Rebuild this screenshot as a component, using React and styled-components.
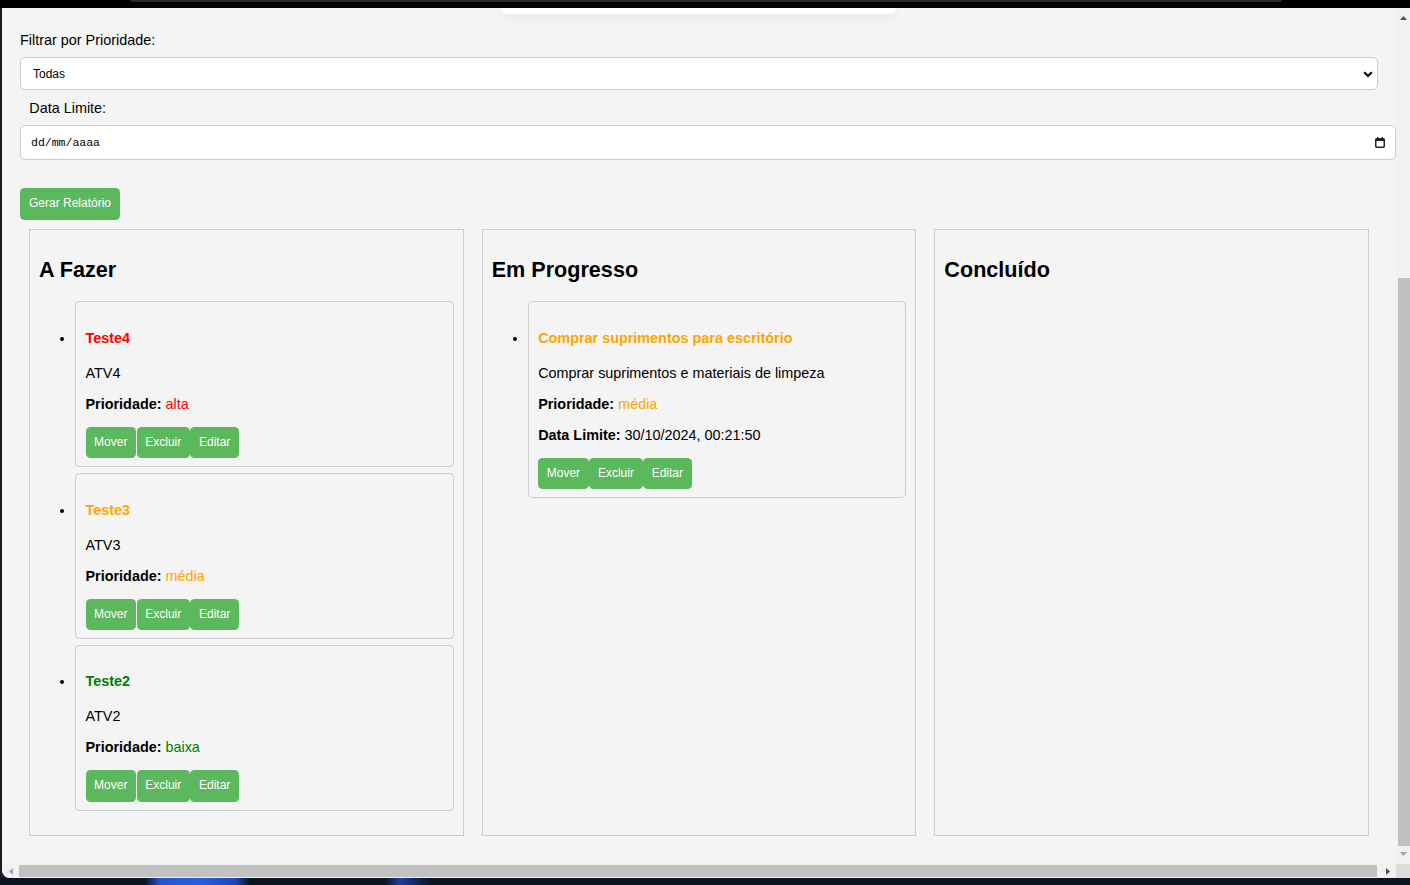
import React from 'react';
import styled, { createGlobalStyle } from 'styled-components';

const GlobalStyle = createGlobalStyle`
  * { box-sizing: border-box; }
  html, body {
    margin: 0;
    padding: 0;
    overflow: hidden;
    background: #0b1322;
  }
  #root { width: 1410px; height: 885px; }
`;

const Desktop = styled.div`
  display: flex;
  flex-direction: column;
  width: 1410px;
  height: 885px;
  background: #0b1322;
  font-family: "Liberation Sans", Arial, sans-serif;
`;

const TopBar = styled.div`
  flex: none;
  height: 8px;
  background: #000;
`;

const TabStrip = styled.div`
  margin-left: 130px;
  width: 1152px;
  height: 2px;
  background: #2a2a31;
  border-radius: 0 0 2px 2px;
`;

const WindowRow = styled.div`
  flex: 1;
  display: flex;
  min-height: 0;
  padding-left: 2px;
  background: #1a1c22;
`;

const Window = styled.div`
  flex: 1;
  min-width: 0;
  display: grid;
  grid-template-columns: 1fr 14px;
  grid-template-rows: 1fr 14px;
  background: #f4f4f4;
  border-bottom-left-radius: 8px;
  overflow: hidden;
`;

const BottomBar = styled.div`
  flex: none;
  height: 7px;
  background: linear-gradient(
    90deg,
    #0c1424 0,
    #0c1424 145px,
    #2456d0 160px,
    #2a5ee0 200px,
    #1c47bb 235px,
    #0c1424 250px,
    #0c1424 385px,
    #1d3f9e 400px,
    #0c1424 430px,
    #0c1424 100%
  );
`;

const Viewport = styled.div`
  grid-row: 1;
  grid-column: 1;
  min-height: 0;
  overflow: hidden;
`;

const Page = styled.div`
  padding: 0 18px;
  color: #000;
`;

const PeekCard = styled.div`
  margin-left: 481px;
  width: 395px;
  height: 6px;
  background: #fff;
  border-radius: 0 0 5px 5px;
  box-shadow: 0 3px 10px rgba(0, 0, 0, 0.07);
`;

const FieldLabel = styled.label`
  display: block;
  font-size: 14.4px;
  line-height: 16.5px;
  margin-top: ${p => p.$top}px;
  margin-left: ${p => p.$indent || 0}px;
`;

const SelectWrap = styled.div`
  position: relative;
  margin-top: 8.4px;
`;

const Select = styled.select`
  display: block;
  appearance: none;
  width: 100%;
  height: 33px;
  padding: 0 12px;
  border: 1px solid #ccc;
  border-radius: 5px;
  background: #fff;
  color: #000;
  font-family: "Liberation Sans", Arial, sans-serif;
  font-size: 12px;
  outline: none;
`;

const Chevron = styled.svg`
  position: absolute;
  right: 5px;
  top: 14px;
  pointer-events: none;
`;

const DateBox = styled.div`
  display: flex;
  align-items: center;
  justify-content: space-between;
  width: calc(100% + 18px);
  height: 35px;
  margin-top: 8.5px;
  padding: 0 10px;
  border: 1px solid #ccc;
  border-radius: 5px;
  background: #fff;
  font-family: "Liberation Mono", "Courier New", monospace;
  font-size: 11.5px;
  color: #000;
`;

const Btn = styled.button`
  border: 0;
  border-radius: 4.5px;
  padding: 9px 8.6px;
  background: #5cb85c;
  color: #fff;
  font-family: "Liberation Sans", Arial, sans-serif;
  font-size: 12px;
  line-height: 13.8px;
  cursor: pointer;
`;

const ReportButton = styled(Btn)`
  display: block;
  margin-top: 27.7px;
  padding: 9px;
`;

const Board = styled.div`
  display: flex;
  margin-top: 9.5px;
`;

const Column = styled.section`
  flex: 1;
  min-width: 0;
  margin: 0 9px;
  padding: 9px;
  border: 1px solid #ccc;
  background: #f4f4f4;
`;

const ColumnTitle = styled.h2`
  margin: 17.9px 0;
  font-size: 21.6px;
  font-weight: bold;
`;

const TaskList = styled.ul`
  margin: 14.4px 0;
  padding-left: 36px;
`;

const Card = styled.li`
  margin-bottom: 5.5px;
  padding: 9.6px 10px 8px 9.5px;
  border: 1px solid #ccc;
  border-radius: 4.5px;
  font-size: 14.4px;
  line-height: 17px;
`;

const CardTitle = styled.p`
  margin: 18px 0;
  font-weight: bold;
  color: ${p => p.$color};
`;

const CardLine = styled.p`
  margin: 14px 0;
`;

const Prio = styled.span`
  color: ${p => p.$color};
`;

const ButtonRow = styled.div`
  display: flex;
  gap: 0.6px;
`;

const VScroll = styled.div`
  grid-row: 1;
  grid-column: 2;
  display: flex;
  flex-direction: column;
  background: #f1f1f1;
`;

const HScroll = styled.div`
  grid-row: 2;
  grid-column: 1;
  display: flex;
  background: #f1f1f1;
`;

const Corner = styled.div`
  grid-row: 2;
  grid-column: 2;
  background: #dcdcdc;
`;

const ArrowBox = styled.div`
  flex: none;
  display: flex;
  align-items: center;
  justify-content: center;
  width: ${p => (p.$w ? `${p.$w}px` : 'auto')};
  height: ${p => (p.$h ? `${p.$h}px` : 'auto')};
  padding: ${p => p.$pad || 0};
`;

const VThumb = styled.div`
  flex: 1;
  margin: 250px 0 0 2px;
  background: #c1c1c1;
`;

const HThumb = styled.div`
  flex: 1;
  margin: 1px 0;
  background: #c1c1c1;
`;

const priorityColors = {
  alta: '#ff0000',
  'média': '#ffa500',
  baixa: '#008000',
};

const columns = [
  {
    title: 'A Fazer',
    tasks: [
      { id: 4, title: 'Teste4', desc: 'ATV4', priority: 'alta' },
      { id: 3, title: 'Teste3', desc: 'ATV3', priority: 'média' },
      { id: 2, title: 'Teste2', desc: 'ATV2', priority: 'baixa' },
    ],
  },
  {
    title: 'Em Progresso',
    tasks: [
      {
        id: 1,
        title: 'Comprar suprimentos para escritório',
        desc: 'Comprar suprimentos e materiais de limpeza',
        priority: 'média',
        deadline: '30/10/2024, 00:21:50',
      },
    ],
  },
  { title: 'Concluído', tasks: [] },
];

function Arrow({ dir, color }) {
  const pts = {
    up: '0,4 3.5,0 7,4',
    down: '0,0 7,0 3.5,4',
    left: '4,0 4,7 0,3.5',
    right: '0,0 4,3.5 0,7',
  }[dir];
  const vertical = dir === 'up' || dir === 'down';
  return (
    <svg width={vertical ? 7 : 4} height={vertical ? 4 : 7} viewBox={vertical ? '0 0 7 4' : '0 0 4 7'}>
      <polygon points={pts} fill={color} />
    </svg>
  );
}

function CalendarIcon() {
  return (
    <svg width="10" height="11" viewBox="0 0 10 11">
      <rect x="0.75" y="1.75" width="8.5" height="8.5" rx="1" fill="none" stroke="#222" strokeWidth="1.5" />
      <rect x="0.75" y="1.5" width="8.5" height="2.5" fill="#222" />
      <rect x="2" y="0" width="1.3" height="2" fill="#222" />
      <rect x="6.7" y="0" width="1.3" height="2" fill="#222" />
    </svg>
  );
}

function TaskCard({ task }) {
  const color = priorityColors[task.priority];
  return (
    <Card>
      <CardTitle $color={color}>{task.title}</CardTitle>
      <CardLine>{task.desc}</CardLine>
      <CardLine>
        <strong>Prioridade:</strong> <Prio $color={color}>{task.priority}</Prio>
      </CardLine>
      {task.deadline && (
        <CardLine>
          <strong>Data Limite:</strong> {task.deadline}
        </CardLine>
      )}
      <ButtonRow>
        <Btn>Mover</Btn>
        <Btn>Excluir</Btn>
        <Btn>Editar</Btn>
      </ButtonRow>
    </Card>
  );
}

export default function App() {
  return (
    <>
      <GlobalStyle />
      <Desktop>
        <TopBar>
          <TabStrip />
        </TopBar>
        <WindowRow>
          <Window>
            <Viewport>
              <Page>
                <PeekCard />
                <FieldLabel $top={18.4} htmlFor="prio">Filtrar por Prioridade:</FieldLabel>
                <SelectWrap>
                  <Select id="prio" defaultValue="todas">
                    <option value="todas">Todas</option>
                    <option value="alta">Alta</option>
                    <option value="media">Média</option>
                    <option value="baixa">Baixa</option>
                  </Select>
                  <Chevron width="10" height="7" viewBox="0 0 10 7">
                    <polyline points="1.2,1.2 5,5 8.8,1.2" fill="none" stroke="#000" strokeWidth="2.2" />
                  </Chevron>
                </SelectWrap>
                <FieldLabel $top={10} $indent={9.3}>Data Limite:</FieldLabel>
                <DateBox>
                  <span>dd/mm/aaaa</span>
                  <CalendarIcon />
                </DateBox>
                <ReportButton>Gerar Relatório</ReportButton>
                <Board>
                  {columns.map(col => (
                    <Column key={col.title}>
                      <ColumnTitle>{col.title}</ColumnTitle>
                      <TaskList>
                        {col.tasks.map(task => (
                          <TaskCard key={task.id} task={task} />
                        ))}
                      </TaskList>
                    </Column>
                  ))}
                </Board>
              </Page>
            </Viewport>
            <VScroll>
              <ArrowBox $h={20}>
                <Arrow dir="up" color="#505050" />
              </ArrowBox>
              <VThumb />
              <ArrowBox $h={18} $pad="0 0 3px 0">
                <Arrow dir="down" color="#a3a3a3" />
              </ArrowBox>
            </VScroll>
            <HScroll>
              <ArrowBox $w={17}>
                <Arrow dir="left" color="#a3a3a3" />
              </ArrowBox>
              <HThumb />
              <ArrowBox $w={19} $pad="0 0 0 3px">
                <Arrow dir="right" color="#505050" />
              </ArrowBox>
            </HScroll>
            <Corner />
          </Window>
        </WindowRow>
        <BottomBar />
      </Desktop>
    </>
  );
}
